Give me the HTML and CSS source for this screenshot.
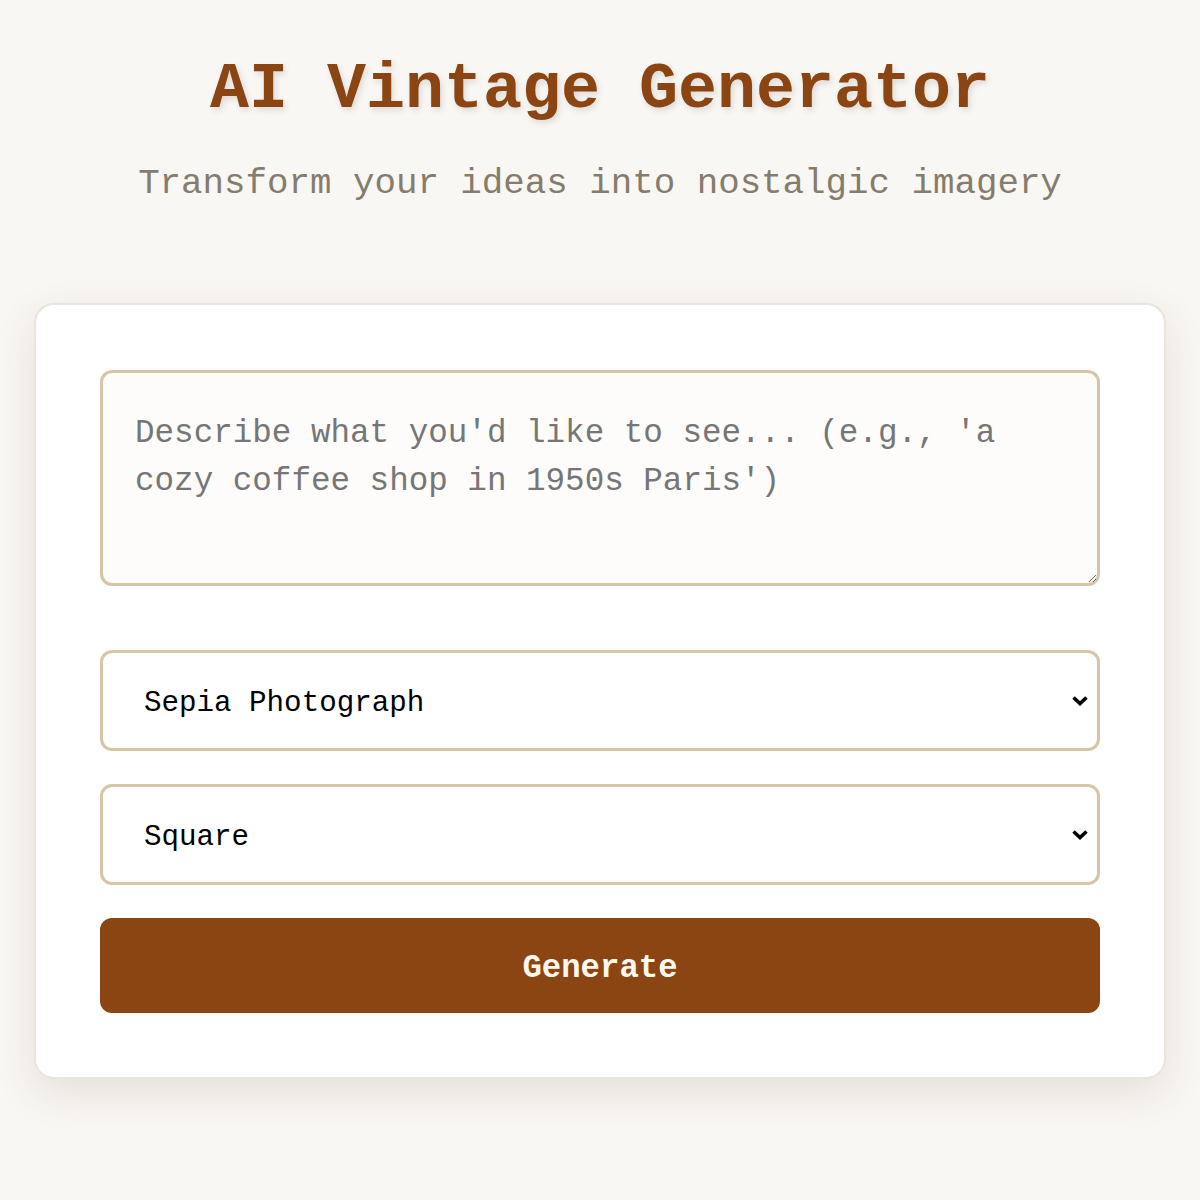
FILE: index.html
```html
<!DOCTYPE html>
<html lang="en">
<head>
<meta charset="utf-8">
<title>AI Vintage Generator</title>
<link rel="stylesheet" href="styles.css">
</head>
<body>
  <header class="hero">
    <h1 class="title">AI Vintage Generator</h1>
    <p class="subtitle">Transform your ideas into nostalgic imagery</p>
  </header>
  <main class="wrap">
    <form class="card">
      <textarea class="prompt" placeholder="Describe what you'd like to see... (e.g., 'a cozy coffee shop in 1950s Paris')"></textarea>
      <div class="select-wrap">
        <select class="field">
          <option>Sepia Photograph</option>
          <option>Polaroid</option>
          <option>Film Noir</option>
        </select>
        <svg class="chev" width="18" height="12" viewBox="0 0 18 12" aria-hidden="true"><path d="M2.5 2.5 L9 8.5 L15.5 2.5" fill="none" stroke="#000" stroke-width="3.6"/></svg>
      </div>
      <div class="select-wrap">
        <select class="field">
          <option>Square</option>
          <option>Portrait</option>
          <option>Landscape</option>
        </select>
        <svg class="chev" width="18" height="12" viewBox="0 0 18 12" aria-hidden="true"><path d="M2.5 2.5 L9 8.5 L15.5 2.5" fill="none" stroke="#000" stroke-width="3.6"/></svg>
      </div>
      <button type="button" class="generate">Generate</button>
    </form>
  </main>
</body>
</html>
```

FILE: styles.css
```css
* { box-sizing: border-box; }

html, body {
  margin: 0;
  padding: 0;
  background: #f9f7f3;
  font-family: "Liberation Mono", "DejaVu Sans Mono", monospace;
}

body {
  min-height: 1200px;
}

.hero {
  padding-top: 51px;
  text-align: center;
}

.title {
  margin: 0;
  font-size: 65px;
  line-height: 78px;
  font-weight: 700;
  color: #8b4513;
  text-shadow: 2px 3px 6px rgba(0, 0, 0, 0.12);
}

.subtitle {
  margin: 33px 0 0;
  font-size: 35.8px;
  line-height: 43px;
  color: #867c6c;
}

.wrap {
  padding: 98px 34px 0;
}

.card {
  display: flex;
  flex-direction: column;
  gap: 33px;
  background: #ffffff;
  border: 2px solid #e9e5dc;
  border-radius: 20px;
  padding: 65px 64px 64px;
  box-shadow: 0 14px 40px rgba(80, 60, 30, 0.12);
}

.prompt {
  display: block;
  width: 100%;
  height: 216px;
  margin-bottom: 31px;
  padding: 37px 32px 27px;
  border: 3px solid #d6c6a5;
  border-radius: 12px;
  background: #fdfcfa;
  font-family: inherit;
  font-size: 32.6px;
  line-height: 48px;
  color: #333;
  resize: vertical;
  outline: none;
}

.prompt::placeholder {
  color: #767676;
}

.select-wrap {
  position: relative;
}

.field {
  display: block;
  width: 100%;
  height: 101px;
  padding: 6px 50px 0 41px;
  border: 3px solid #d6c6a5;
  border-radius: 12px;
  background: #ffffff;
  font-family: inherit;
  font-size: 29.2px;
  color: #000;
  outline: none;
  -webkit-appearance: none;
  appearance: none;
}

.chev {
  position: absolute;
  right: 11px;
  top: 50%;
  margin-top: -6px;
  pointer-events: none;
}

.generate {
  display: block;
  width: 100%;
  height: 95px;
  padding-top: 7px;
  border: none;
  border-radius: 12px;
  background: #8b4513;
  color: #fdf8ef;
  font-family: inherit;
  font-size: 32.3px;
  font-weight: 700;
  cursor: pointer;
}
```
